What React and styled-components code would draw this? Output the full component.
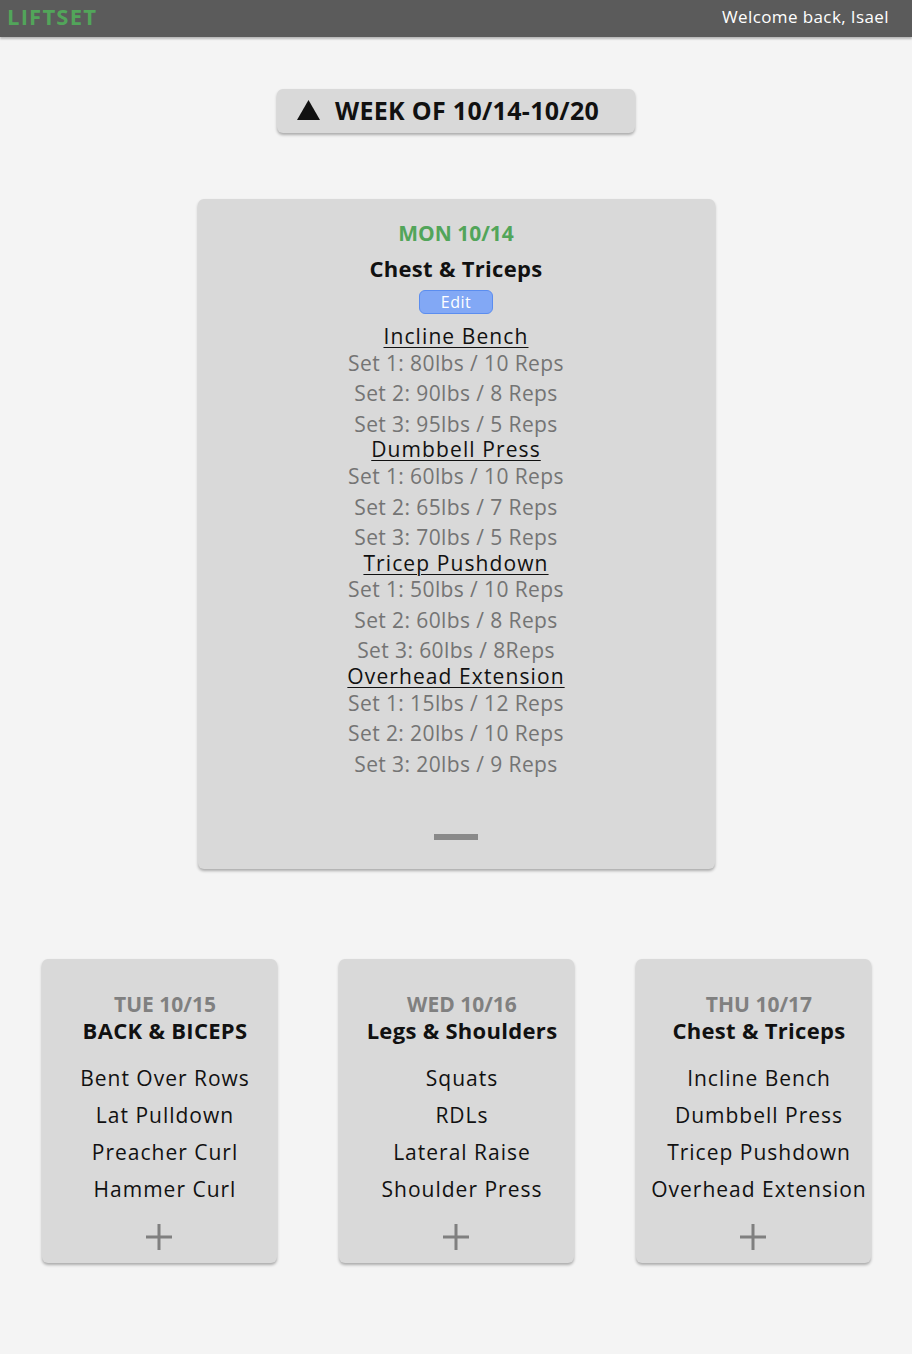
import React from 'react';
import styled, { createGlobalStyle } from 'styled-components';

const GlobalStyle = createGlobalStyle`
  body {
    margin: 0;
    background: #f4f4f4;
    font-family: 'Open Sans', 'Liberation Sans', sans-serif;
  }
`;

const Header = styled.header`
  height: 37px;
  background: #5b5b5b;
  box-shadow: 0 2px 2px rgba(0, 0, 0, 0.25);
  display: flex;
  align-items: center;
  justify-content: space-between;
  padding: 0 23px 5px 7px;
  box-sizing: border-box;
`;

const Logo = styled.div`
  color: #52a55a;
  font-weight: 700;
  font-size: 22px;
  letter-spacing: 1.2px;
`;

const Welcome = styled.div`
  color: #ffffff;
  font-size: 17px;
  letter-spacing: 0.4px;
`;

const Main = styled.main`
  display: flex;
  flex-direction: column;
  align-items: center;
  padding-top: 52px;
`;

const WeekButton = styled.button`
  width: 358px;
  height: 44px;
  border: none;
  border-radius: 6px;
  background: #d9d9d9;
  box-shadow: 0 2px 3px rgba(0, 0, 0, 0.3);
  display: flex;
  align-items: center;
  gap: 15px;
  padding: 0 0 2px 20px;
  font-family: inherit;
  font-weight: 700;
  font-size: 25px;
  letter-spacing: 0.3px;
  color: #111;
  cursor: pointer;
`;

const Card = styled.section`
  background: #d9d9d9;
  border-radius: 6px;
  box-shadow: 0 2px 3px rgba(0, 0, 0, 0.3);
  display: flex;
  flex-direction: column;
  align-items: center;
  text-align: center;
`;

const DayCard = styled(Card)`
  width: 517px;
  height: 670px;
  margin-top: 66px;
  padding-top: 21px;
  box-sizing: border-box;
`;

const DayLabel = styled.div`
  font-weight: 700;
  font-size: 21px;
  line-height: 26px;
  color: ${p => p.$green ? '#52a55a' : '#808080'};
`;

const DayTitle = styled.div`
  font-weight: 700;
  font-size: 22px;
  letter-spacing: 0.3px;
  line-height: 26px;
  color: #111;
  margin-top: ${p => p.$gap || 0}px;
`;

const EditButton = styled.button`
  width: 74px;
  height: 24px;
  margin: 9px 0 12px;
  border: 1px solid #5b8def;
  border-radius: 6px;
  background: #82a8f5;
  color: #fff;
  font-family: inherit;
  font-size: 16px;
  letter-spacing: 0.5px;
  padding: 0;
  cursor: pointer;
`;

const ExerciseName = styled.div`
  font-size: 21px;
  letter-spacing: 1.1px;
  line-height: 21.8px;
  color: #111;
  text-decoration: underline;
  text-underline-offset: 3px;
  text-decoration-thickness: 1px;
`;

const SetLine = styled.div`
  font-size: 21px;
  letter-spacing: 0.4px;
  line-height: 30.5px;
  color: #747474;
`;

const Collapse = styled.div`
  width: 44px;
  height: 6px;
  background: #8a8a8a;
  margin-top: auto;
  margin-bottom: 29px;
`;

const Row = styled.div`
  display: flex;
  justify-content: center;
  gap: 62px;
  margin-top: 90px;
  margin-bottom: 90px;
`;

const SmallCard = styled(Card)`
  width: 235px;
  height: 304px;
  padding-top: 32px;
  box-sizing: border-box;
`;

const CardText = styled.div`
  display: flex;
  flex-direction: column;
  align-items: center;
  padding-left: 12px;
`;

const List = styled.div`
  margin-top: 17px;
  display: flex;
  flex-direction: column;
  align-items: center;
`;

const ListItem = styled.div`
  font-size: 21px;
  letter-spacing: 1px;
  line-height: 37px;
  color: #111;
  white-space: nowrap;
`;

const Plus = styled.svg`
  margin-top: 15px;
`;

const days = [
  {
    day: 'TUE 10/15',
    title: 'BACK & BICEPS',
    items: ['Bent Over Rows', 'Lat Pulldown', 'Preacher Curl', 'Hammer Curl'],
  },
  {
    day: 'WED 10/16',
    title: 'Legs & Shoulders',
    items: ['Squats', 'RDLs', 'Lateral Raise', 'Shoulder Press'],
  },
  {
    day: 'THU 10/17',
    title: 'Chest & Triceps',
    items: ['Incline Bench', 'Dumbbell Press', 'Tricep Pushdown', 'Overhead Extension'],
  },
];

const monday = [
  { name: 'Incline Bench', sets: ['Set 1: 80lbs / 10 Reps', 'Set 2: 90lbs / 8 Reps', 'Set 3: 95lbs / 5 Reps'] },
  { name: 'Dumbbell Press', sets: ['Set 1: 60lbs / 10 Reps', 'Set 2: 65lbs / 7 Reps', 'Set 3: 70lbs / 5 Reps'] },
  { name: 'Tricep Pushdown', sets: ['Set 1: 50lbs / 10 Reps', 'Set 2: 60lbs / 8 Reps', 'Set 3: 60lbs / 8Reps'] },
  { name: 'Overhead Extension', sets: ['Set 1: 15lbs / 12 Reps', 'Set 2: 20lbs / 10 Reps', 'Set 3: 20lbs / 9 Reps'] },
];

export default function App() {
  return (
    <>
      <GlobalStyle />
      <Header>
        <Logo>LIFTSET</Logo>
        <Welcome>Welcome back, Isael</Welcome>
      </Header>
      <Main>
        <WeekButton>
          <svg width="23" height="20" viewBox="0 0 23 20">
            <polygon points="11.5,0 23,20 0,20" fill="#111" />
          </svg>
          WEEK OF 10/14-10/20
        </WeekButton>

        <DayCard>
          <DayLabel $green>MON 10/14</DayLabel>
          <DayTitle $gap={9}>Chest &amp; Triceps</DayTitle>
          <EditButton>Edit</EditButton>
          {monday.map(ex => (
            <React.Fragment key={ex.name}>
              <ExerciseName>{ex.name}</ExerciseName>
              {ex.sets.map(s => <SetLine key={s}>{s}</SetLine>)}
            </React.Fragment>
          ))}
          <Collapse />
        </DayCard>

        <Row>
          {days.map(d => (
            <SmallCard key={d.day}>
              <CardText>
                <DayLabel>{d.day}</DayLabel>
                <DayTitle>{d.title}</DayTitle>
                <List>
                  {d.items.map(i => <ListItem key={i}>{i}</ListItem>)}
                </List>
              </CardText>
              <Plus width="28" height="28" viewBox="0 0 28 28">
                <path d="M14 1v26M1 14h26" stroke="#808080" strokeWidth="3" />
              </Plus>
            </SmallCard>
          ))}
        </Row>
      </Main>
    </>
  );
}
